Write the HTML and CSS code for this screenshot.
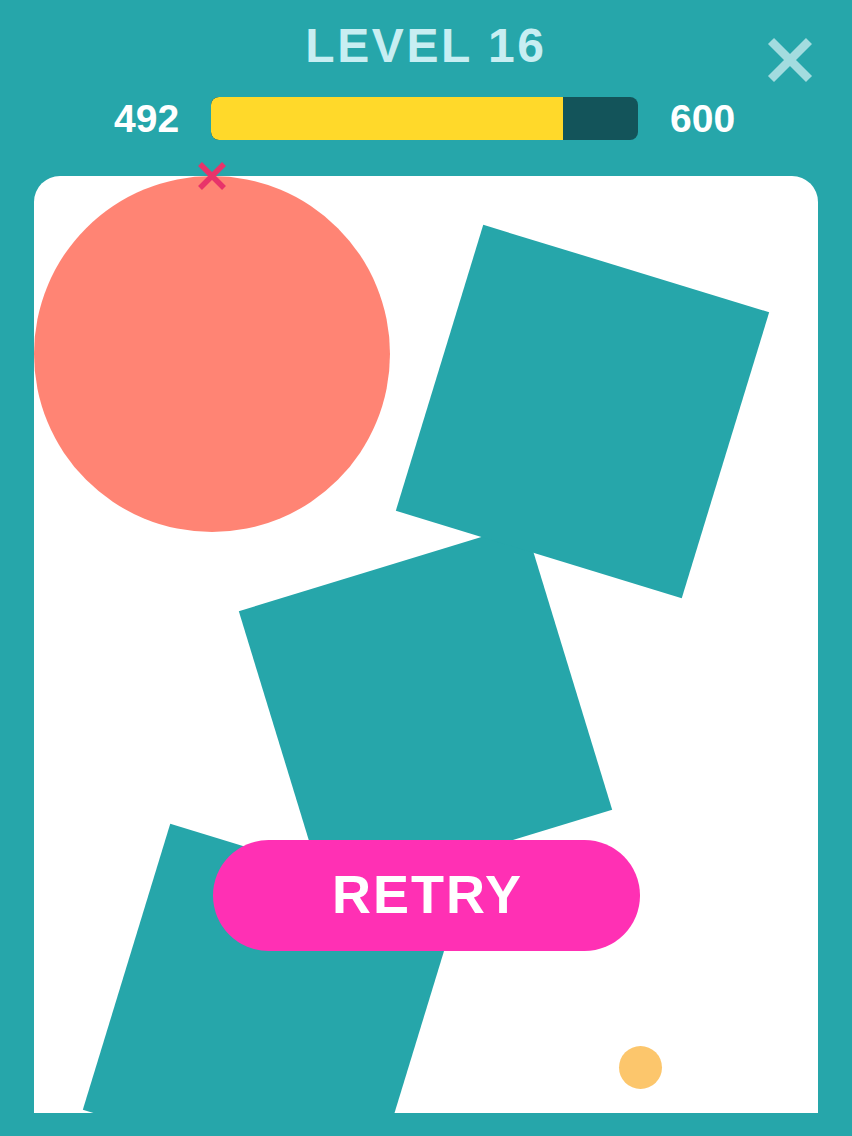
FILE: index.html
```html
<!DOCTYPE html>
<html>
<head>
<meta charset="utf-8">
<link rel="stylesheet" href="styles.css">
</head>
<body>
<div class="screen">
  <header class="header">
    <h1 class="title">LEVEL 16</h1>
    <button class="close" aria-label="Close">
      <svg viewBox="0 0 46 46" width="46" height="46"><path d="M4 4 L42 42 M42 4 L4 42" stroke="#a3dcdf" stroke-width="8.5" stroke-linecap="butt"/></svg>
    </button>
  </header>
  <div class="progress">
    <span class="num">492</span>
    <div class="bar"><div class="fill" style="width: 82.4%"></div></div>
    <span class="num">600</span>
  </div>
  <div class="stage">
    <div class="board">
      <div class="circle"></div>
      <div class="sq sq3"></div>
      <div class="sq sq2"></div>
      <div class="sq sq1"></div>
      <div class="dot"></div>
    </div>
    <svg class="marker" viewBox="0 0 28 28" width="28" height="28"><path d="M2 2 L26 26 M26 2 L2 26" stroke="#e8336a" stroke-width="5.5"/></svg>
    <button class="retry">RETRY</button>
  </div>
</div>
</body>
</html>
```
FILE: styles.css
```css
html, body {
  margin: 0;
  padding: 0;
  background: #26a6aa;
}
body {
  width: 852px;
  height: 1136px;
  overflow: hidden;
  font-family: "Liberation Sans", Arial, sans-serif;
}
.screen {
  width: 852px;
  height: 1136px;
  position: relative;
}
.header {
  position: relative;
  padding-top: 18px;
  height: 56px;
}
.title {
  margin: 0;
  text-align: center;
  font-size: 48px;
  line-height: 56px;
  font-weight: bold;
  letter-spacing: 2.6px;
  color: #c8eef2;
  padding-left: 0;
}
.close {
  position: absolute;
  left: 767px;
  top: 37px;
  width: 46px;
  height: 46px;
  padding: 0;
  border: 0;
  background: none;
}
.close svg { display: block; }
.progress {
  margin-top: 23px;
  height: 43px;
  display: flex;
  align-items: center;
  gap: 32px;
  padding-left: 114px;
}
.num {
  font-size: 39px;
  font-weight: bold;
  color: #ffffff;
  line-height: 43px;
}
.bar {
  width: 427px;
  height: 43px;
  border-radius: 8px;
  background: #13545a;
  overflow: hidden;
  display: flex;
}
.fill {
  height: 100%;
  background: #ffd92a;
  border-radius: 8px 0 0 8px;
}
.stage {
  position: relative;
  margin: 36px 34px 0 34px;
  width: 784px;
  height: 937px;
}
.board {
  position: relative;
  width: 784px;
  height: 937px;
  background: #ffffff;
  border-radius: 26px 26px 0 0;
  overflow: hidden;
}
.circle {
  position: absolute;
  left: 0;
  top: 0;
  width: 356px;
  height: 356px;
  border-radius: 50%;
  background: #ff8474;
}
.sq {
  position: absolute;
  width: 299px;
  height: 299px;
  background: #26a6aa;
}
.sq1 {
  left: 399px;
  top: 85.5px;
  transform: rotate(17deg);
}
.sq2 {
  left: 242px;
  top: 385px;
  transform: rotate(-17deg);
}
.sq3 {
  left: 86px;
  top: 685px;
  transform: rotate(17deg);
}
.dot {
  position: absolute;
  left: 584.5px;
  top: 869.5px;
  width: 43px;
  height: 43px;
  border-radius: 50%;
  background: #fcc66c;
}
.marker {
  position: absolute;
  left: 164px;
  top: -14px;
  display: block;
}
.retry {
  position: absolute;
  left: 179px;
  top: 664px;
  width: 427px;
  height: 111px;
  border: 0;
  border-radius: 56px;
  background: #ff30b4;
  color: #ffffff;
  font-family: "Liberation Sans", Arial, sans-serif;
  font-weight: bold;
  font-size: 54px;
  letter-spacing: 2px;
  padding: 0 0 4px 2px;
}
```
